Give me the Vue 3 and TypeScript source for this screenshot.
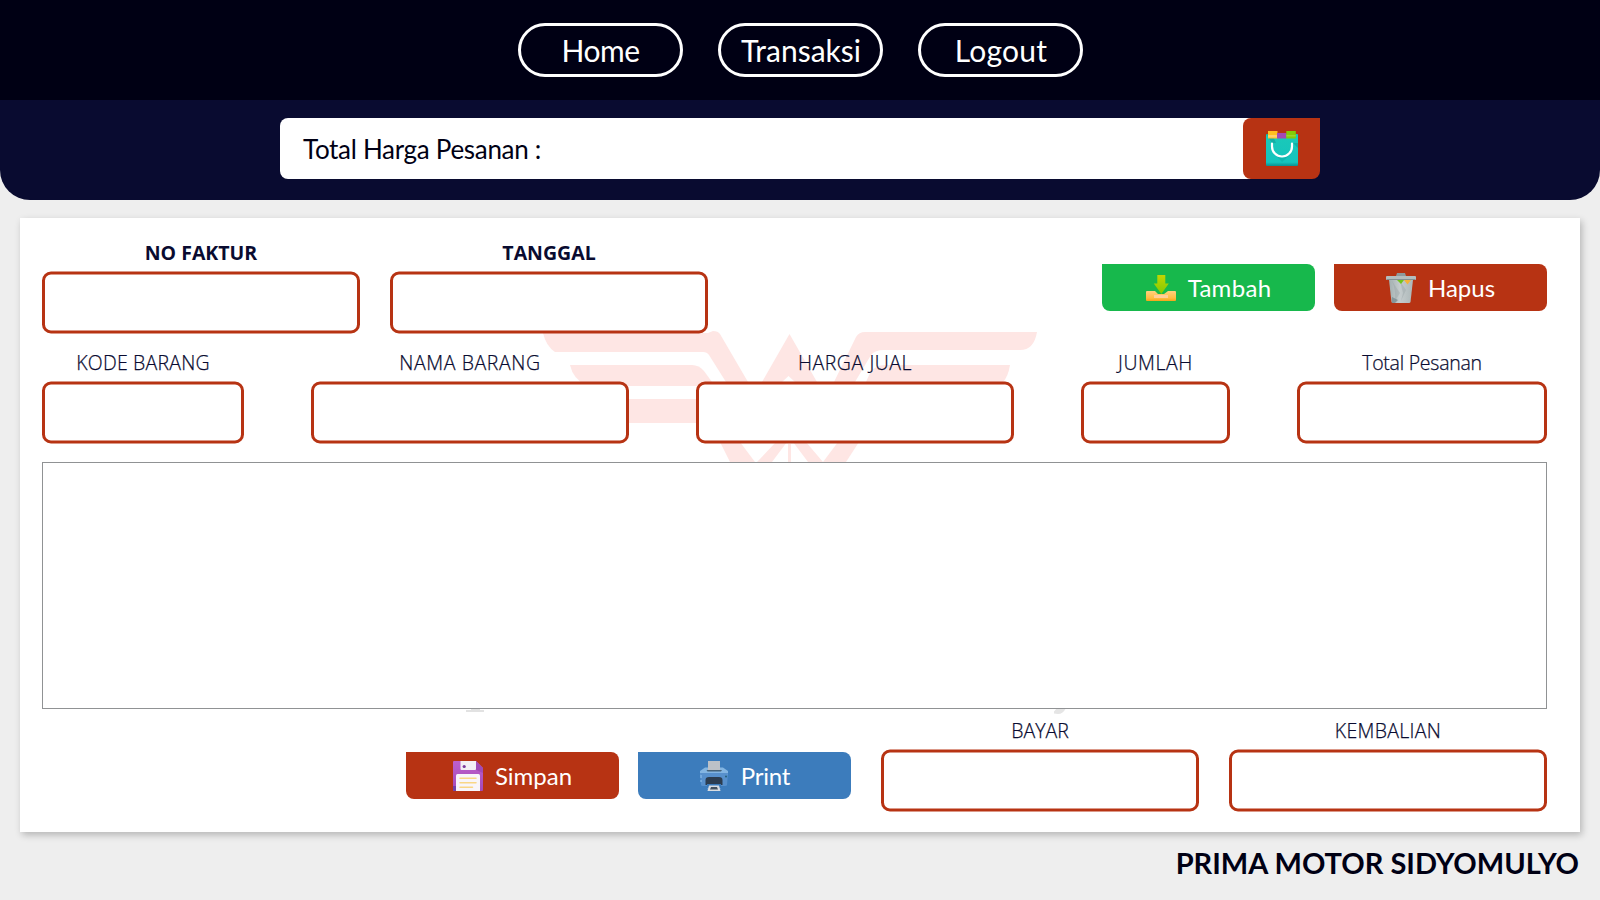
<script setup lang="ts">
import { ref } from 'vue'

interface Field {
  id: string
  label: string
  size: string
}

const menu: string[] = ['Home', 'Transaksi', 'Logout']

const invoiceFields: Field[] = [
  { id: 'faktur', label: 'NO FAKTUR', size: 'wide' },
  { id: 'tanggal', label: 'TANGGAL', size: 'wide' },
]

const itemFields: Field[] = [
  { id: 'kode', label: 'KODE BARANG', size: 'code' },
  { id: 'nama', label: 'NAMA BARANG', size: 'wide' },
  { id: 'harga', label: 'HARGA JUAL', size: 'wide' },
  { id: 'jumlah', label: 'JUMLAH', size: 'count' },
  { id: 'total', label: 'Total Pesanan', size: 'sum' },
]

const paymentFields: Field[] = [
  { id: 'bayar', label: 'BAYAR', size: 'wide' },
  { id: 'kembalian', label: 'KEMBALIAN', size: 'wide' },
]

const values = ref<Record<string, string>>({})
</script>

<template>
  <div class="page">
    <header class="topbar">
      <nav class="menu">
        <button v-for="item in menu" :key="item" class="menu-item" :class="item.toLowerCase()"><span>{{ item }}</span></button>
      </nav>
    </header>

    <section class="band">
      <div class="total-bar">
        <span class="total-text">Total Harga Pesanan :</span>
        <button class="bag">
          <svg width="32" height="36" viewBox="0 0 32 36">
            <defs>
              <linearGradient id="bagFill" x1="0" y1="0" x2="0" y2="1">
                <stop offset="0" stop-color="#1bc9b8" />
                <stop offset=".88" stop-color="#14c4bd" />
                <stop offset="1" stop-color="#0a8f90" />
              </linearGradient>
            </defs>
            <rect x="0" y="3" width="32" height="32" rx="1" fill="url(#bagFill)" />
            <path d="M0 3h6l4 9-4 0zM27 12l5 5v-5z" fill="#119f98" opacity=".6" />
            <path d="M8 22l8 9 10-9-10 5z" fill="#0fa9a3" opacity=".55" />
            <rect x="2" y="0" width="9.5" height="7.5" fill="#ffbf1f" />
            <rect x="2" y="4" width="9.5" height="2.5" fill="#ffd06b" />
            <rect x="11" y="2" width="9.5" height="5.5" fill="#a349b5" />
            <rect x="20.3" y="0" width="9.5" height="7.5" fill="#84cc07" />
            <rect x="20.3" y="4" width="9.5" height="1.5" fill="#98d531" />
            <path d="M6 12.5v3a10 10 0 0 0 20 0v-3" fill="none" stroke="#fff" stroke-width="2.2" stroke-linecap="round" />
          </svg>
        </button>
      </div>
    </section>

    <main class="card">
      <svg class="watermark" width="540" height="400" viewBox="530 320 540 400">
        <g fill="#fee6e4">
          <path d="M543 333H708L713 331Q718 331 720 334L748 382H726L709 355Q707 352 703 352H555Q546 346 543 333Z" />
          <path d="M570 365H692Q699 365 704 371L712 382V386H587Q573 379 570 365Z" />
          <path d="M600 399H700V423H629Q603 418 600 399Z" />
          <path d="M762 382L789.500 334L817 382H795L788.500 376L782 382Z" />
          <path d="M834 382L856 337Q859 332 865 332H1037Q1034 350 1020 350H884Q875 350 871 355L855 382Z" />
          <path d="M866 382L870 373Q875 365 885 365H1010Q1008 377 1003 382Z" />
          <path d="M720 442H740L755 462H730Z" />
          <path d="M776 442H787L772 462H757Z" />
          <path d="M788 444H791V462H788Z" />
          <path d="M793 442H806L823 462H808Z" />
          <path d="M838 442H859L846 462H823Z" />
        </g>
        <path d="M466 710H484V712H466ZM471 708H480V710H471Z" fill="#e2e2e2" />
        <path d="M1057 708H1066Q1063 714 1058 714L1054 713.500V711.500Z" fill="#e5e5e5" />
      </svg>

      <div class="first-row">
        <label v-for="f in invoiceFields" :key="f.id" class="field bold" :class="[f.size, f.id]">
          <span>{{ f.label }}</span>
          <input v-model="values[f.id]" type="text" />
        </label>
        <div class="actions">
          <button class="action green">
            <svg width="30" height="30" viewBox="0 0 30 30">
              <defs>
                <linearGradient id="arrowFill" x1="0" y1="0" x2="0" y2="1">
                  <stop offset="0" stop-color="#c3d500" />
                  <stop offset="1" stop-color="#7dcb02" />
                </linearGradient>
                <linearGradient id="trayFill" x1="0" y1="0" x2="0" y2="1">
                  <stop offset="0" stop-color="#ffd080" />
                  <stop offset=".7" stop-color="#ffbe42" />
                  <stop offset="1" stop-color="#f5a419" />
                </linearGradient>
              </defs>
              <path d="M1 18H9L12 21H18L22 18H29Q30 18 30 19V27Q30 28 29 28H1Q0 28 0 27V19Q0 18 1 18Z" fill="url(#trayFill)" />
              <path d="M8 22H22V25H8Z" fill="#ffcf98" />
              <path d="M11.3 2H19.3V10.5H22.8L15.3 21L7.8 10.5H11.3Z" fill="url(#arrowFill)" />
            </svg>
            <span class="t-tambah">Tambah</span>
          </button>
          <button class="action red">
            <svg width="30" height="30" viewBox="0 0 30 30">
              <defs>
                <linearGradient id="binFill" x1="0" y1="0" x2="1" y2="0">
                  <stop offset="0" stop-color="#a3b0b1" />
                  <stop offset=".45" stop-color="#c5cccd" />
                  <stop offset="1" stop-color="#adb8b9" />
                </linearGradient>
              </defs>
              <path d="M10 3L11 0H19L20 3Z" fill="#8e9a9c" />
              <path d="M3 7H27L24.5 29Q24.3 30 23 30H7Q5.7 30 5.5 29Z" fill="url(#binFill)" />
              <path d="M6 8L14 20L9 28Q10 17 6 8ZM14 8L17 20L15 28L20 17Z" fill="#919fa1" opacity=".35" />
              <path d="M6 24L12 27L9 30H6Z" fill="#72868b" opacity=".7" />
              <path d="M11 7H18L15 11Z" fill="#72c51c" />
              <path d="M18 7H25L21.5 11.5Z" fill="#f5b33b" />
              <rect x="0" y="3" width="30" height="4" rx="1" fill="#b3bdbe" />
              <rect x="1" y="6" width="28" height="1" fill="#839092" />
            </svg>
            <span class="t-hapus">Hapus</span>
          </button>
        </div>
      </div>

      <div class="item-row">
        <label v-for="f in itemFields" :key="f.id" class="field" :class="[f.size, f.id]">
          <span>{{ f.label }}</span>
          <input v-model="values[f.id]" type="text" />
        </label>
      </div>

      <div class="table"></div>

      <div class="pay-row">
        <div class="actions">
          <button class="action red">
            <svg width="30" height="30" viewBox="0 0 30 30">
              <defs>
                <linearGradient id="diskFill" x1="0" y1="0" x2="0" y2="1">
                  <stop offset="0" stop-color="#bd60cd" />
                  <stop offset="1" stop-color="#a349b7" />
                </linearGradient>
              </defs>
              <path d="M1 0H23L30 7V29Q30 30 29 30H1Q0 30 0 29V1Q0 0 1 0Z" fill="url(#diskFill)" />
              <path d="M0 25H3V30H1Q0 30 0 29Z" fill="#7140a8" />
              <path d="M23 9V0L30 7V12Z" fill="#a14ab5" />
              <path d="M7.5 0H23V8Q23 9 22 9H8.5Q7.5 9 7.5 8Z" fill="#f3eff5" />
              <circle cx="11.2" cy="5.5" r="1.6" fill="#7b399b" />
              <path d="M4.5 13H25.5Q27 13 27 14.5V30H3V14.5Q3 13 4.5 13Z" fill="#f8f5fa" />
              <path d="M7 17.2H23M7 21.7H23M7 26.2H19.5" stroke="#f9d685" stroke-width="1.5" stroke-linecap="round" />
            </svg>
            <span class="t-simpan">Simpan</span>
          </button>
          <button class="action blue">
            <svg width="30" height="30" viewBox="0 0 30 30">
              <path d="M1 10L6 6.5H24L29 10V14H1Z" fill="#83b5e2" />
              <path d="M1 12H29L28 24Q28 25 26 25H22V28H8V25H4Q2 25 2 24Z" fill="#5790cc" />
              <path d="M7.5 9H23L22 10.5H8.5Z" fill="#456278" />
              <rect x="9" y="0" width="12" height="9" fill="#bdc1c7" />
              <path d="M6.5 24V19Q6.5 16 10 16H20Q23.5 16 23.5 19V24Z" fill="#2c3d50" />
              <path d="M8 23H22V27H8Z" fill="#3979b9" />
              <path d="M10 24.5H20L21.5 30H8.5Z" fill="#d8dde2" />
              <path d="M12 26H18L19 28.5H11Z" fill="#44525f" />
              <circle cx="27" cy="15.5" r="1" fill="#246078" />
              <path d="M2 14V17M2 19V21" stroke="#91c2ee" stroke-width="1" />
            </svg>
            <span class="t-print">Print</span>
          </button>
        </div>
        <label v-for="f in paymentFields" :key="f.id" class="field" :class="[f.size, f.id]">
          <span>{{ f.label }}</span>
          <input v-model="values[f.id]" type="text" />
        </label>
      </div>
    </main>

    <footer class="brand"><span>PRIMA MOTOR SIDYOMULYO</span></footer>
  </div>
</template>

<style>
body {
  margin: 0;
  background: #eee;
}
</style>

<style scoped>
.page {
  width: 1600px;
  height: 900px;
  display: flex;
  flex-direction: column;
  overflow: hidden;
  background: #eee;
  font-family: Lato, "Liberation Sans", sans-serif;
}
button {
  margin: 0;
  padding: 0;
  border: 0;
  font: inherit;
}
.topbar {
  height: 100px;
  flex: none;
  display: flex;
  align-items: center;
  justify-content: center;
  background: #000014;
}
.menu {
  display: flex;
  gap: 35px;
}
.menu-item {
  width: 165px;
  height: 54px;
  border: 3px solid #fff;
  border-radius: 27px;
  background: none;
  color: #fff;
  font-size: 30px;
  line-height: 48px;
  white-space: nowrap;
}
.home {
  letter-spacing: -0.5px;
  text-indent: 1px;
}
.transaksi {
  text-indent: 2px;
}
.logout {
  letter-spacing: 0.2px;
  text-indent: 2px;
}
.band {
  height: 82px;
  flex: none;
  padding-top: 18px;
  display: flex;
  justify-content: center;
  align-items: flex-start;
  background: #090b30;
  border-radius: 0 0 30px 30px;
}
.total-bar {
  width: 1040px;
  height: 61px;
  display: flex;
  align-items: center;
  justify-content: space-between;
  background: #fff;
  border-radius: 8px 0 14px 8px;
}
.total-text {
  padding: 1px 0 0 23px;
  font-size: 26px;
  letter-spacing: -0.3px;
  line-height: 61px;
  color: #000014;
}
.bag {
  width: 77px;
  height: 61px;
  display: flex;
  align-items: center;
  justify-content: center;
  background: #b73313;
  border-radius: 8px 0 8px 8px;
}
.card {
  position: relative;
  box-sizing: border-box;
  width: 1560px;
  height: 614px;
  flex: none;
  margin: 18px 20px 0;
  padding: 20px 33px 0 22px;
  display: flex;
  flex-direction: column;
  background: #fff;
  box-shadow: 2px 3px 7px rgba(0, 0, 0, 0.24);
}
.watermark {
  position: absolute;
  left: 510px;
  top: 102px;
  overflow: visible;
}
.first-row,
.item-row,
.pay-row,
.table {
  position: relative;
}
.first-row {
  display: flex;
  gap: 30px;
  height: 110px;
}
.field {
  display: flex;
  flex-direction: column;
  align-items: center;
  font-family: "Open Sans", "Noto Sans", sans-serif;
  font-size: 19.5px;
  font-weight: 300;
  line-height: 28px;
  color: #090b30;
}
.field span {
  height: 32px;
  padding-top: 1px;
  white-space: nowrap;
  -webkit-text-stroke: 0.25px #090b30;
}
.bold {
  font-weight: 700;
}
.bold span {
  -webkit-text-stroke: 0;
}
.field input {
  box-sizing: border-box;
  width: 100%;
  height: 62px;
  padding: 0 12px;
  border: 3px solid #b73313;
  border-radius: 9px;
  outline: 0;
  background: #fff;
  font: inherit;
  transform: translateY(0.5px);
}
.kode span {
  letter-spacing: 0.2px;
}
.nama span {
  letter-spacing: 0.6px;
}
.harga span {
  letter-spacing: 0.55px;
}
.jumlah span {
  letter-spacing: 0.6px;
}
.total span {
  letter-spacing: -0.25px;
}
.kembalian span {
  letter-spacing: 0.3px;
}
.wide {
  width: 318px;
}
.code {
  width: 202px;
}
.count {
  width: 149px;
}
.sum {
  width: 250px;
}
.actions {
  display: flex;
  gap: 19px;
}
.first-row .actions {
  margin: 26px 0 0 auto;
}
.action {
  width: 213px;
  height: 47px;
  display: flex;
  align-items: center;
  justify-content: center;
  gap: 12px;
  border-radius: 0 8px 8px 8px;
  color: #fff;
  font-size: 24px;
}
.action span {
  padding-bottom: 1px;
}
.t-tambah {
  letter-spacing: 0.3px;
}
.t-print {
  letter-spacing: -0.2px;
}
.green {
  background: #17b84c;
}
.red {
  background: #b73313;
}
.blue {
  background: #3c7cbc;
}
.item-row {
  display: flex;
  justify-content: space-between;
  height: 114px;
}
.table {
  box-sizing: border-box;
  height: 247px;
  border: 1px solid #909294;
  background: #fff;
}
.pay-row {
  display: flex;
  gap: 30px;
  justify-content: flex-end;
  padding-top: 7px;
}
.pay-row .actions {
  padding-top: 36px;
}
.brand {
  padding: 10px 21px 0 0;
  text-align: right;
  font-size: 29px;
  font-weight: 700;
  line-height: 42px;
  color: #000014;
}
</style>
